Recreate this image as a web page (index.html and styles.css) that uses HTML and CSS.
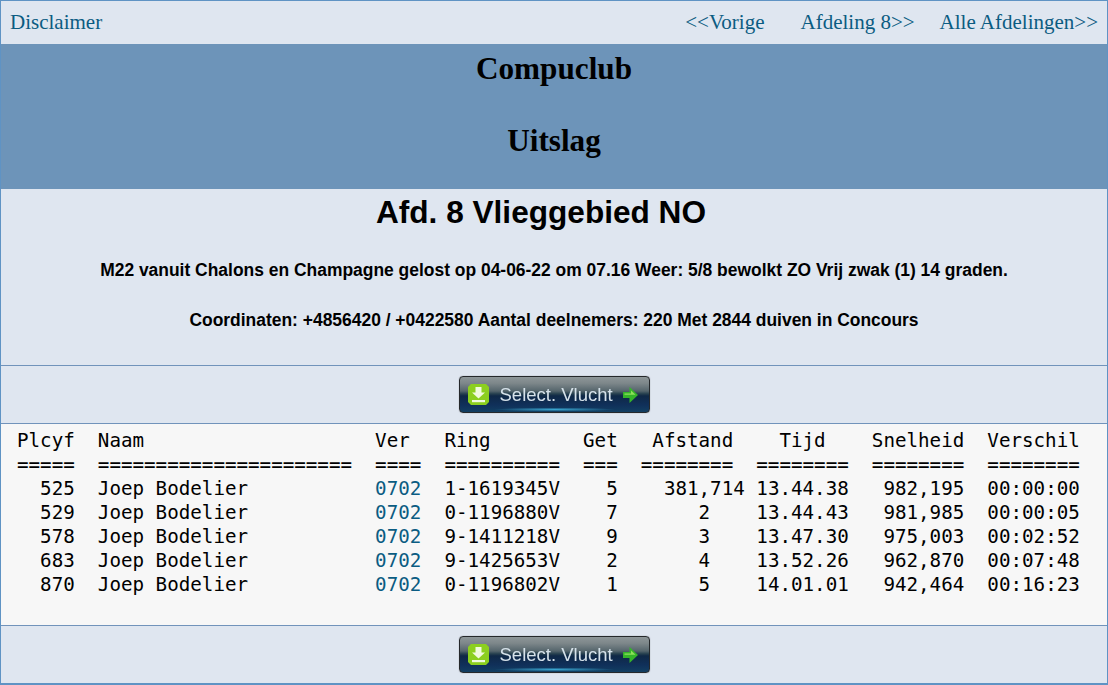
FILE: index.html
```html
<!DOCTYPE html>
<html lang="nl">
<head>
<meta charset="utf-8">
<title>Uitslag</title>
<link rel="stylesheet" href="styles.css">
</head>
<body>
<div class="page">
  <nav class="topbar">
    <a href="#">Disclaimer</a>
    <div class="topbar-right">
      <a href="#">&lt;&lt;Vorige</a>
      <a href="#" class="next">Afdeling 8&gt;&gt;</a>
      <a href="#" class="all">Alle Afdelingen&gt;&gt;</a>
    </div>
  </nav>
  <header class="band">
    <h2>Compuclub</h2>
    <h2>Uitslag</h2>
  </header>
  <section class="info">
    <h1>Afd. 8 Vlieggebied NO</h1>
    <p>M22 vanuit Chalons en Champagne gelost op 04-06-22 om 07.16 Weer: 5/8 bewolkt ZO Vrij zwak (1) 14 graden.</p>
    <p>Coordinaten: +4856420 / +0422580 Aantal deelnemers: 220 Met 2844 duiven in Concours</p>
  </section>
  <div class="btnrow">
    <a href="#" class="vbtn">
      <svg class="ic-dl" width="21" height="21" viewBox="0 0 21 21"><path d="M3 0h15l3 3v15l-3 3H3l-3-3V3z" fill="#8ccf1e"/><path d="M7.500 3h6v5.500h3.500l-6.500 6-6.500-6h3.500z" fill="#f0fadc"/><rect x="4" y="16" width="13" height="2.200" fill="#f0fadc"/></svg>
      <span class="vbtn-label">Select. Vlucht</span>
      <svg class="ic-arrow" width="15" height="16" viewBox="0 0 15 16"><path d="M0 5h6.500V0L15 8l-8.500 8v-5H0z" fill="#35b52a"/><path d="M1.500 6.500h6.500V3.500l4.500 4.300H1.500z" fill="#8fe05a"/></svg>
    </a>
  </div>
  <pre class="uitslag">Plcyf  Naam                    Ver   Ring        Get   Afstand    Tijd    Snelheid  Verschil
=====  ======================  ====  ==========  ===  ========  ========  ========  ========
  525  Joep Bodelier           <a href="#">0702</a>  1-1619345V    5    381,714 13.44.38   982,195  00:00:00
  529  Joep Bodelier           <a href="#">0702</a>  0-1196880V    7       2    13.44.43   981,985  00:00:05
  578  Joep Bodelier           <a href="#">0702</a>  9-1411218V    9       3    13.47.30   975,003  00:02:52
  683  Joep Bodelier           <a href="#">0702</a>  9-1425653V    2       4    13.52.26   962,870  00:07:48
  870  Joep Bodelier           <a href="#">0702</a>  0-1196802V    1       5    14.01.01   942,464  00:16:23

</pre>
  <div class="btnrow btnrow-last">
    <a href="#" class="vbtn">
      <svg class="ic-dl" width="21" height="21" viewBox="0 0 21 21"><path d="M3 0h15l3 3v15l-3 3H3l-3-3V3z" fill="#8ccf1e"/><path d="M7.500 3h6v5.500h3.500l-6.500 6-6.500-6h3.500z" fill="#f0fadc"/><rect x="4" y="16" width="13" height="2.200" fill="#f0fadc"/></svg>
      <span class="vbtn-label">Select. Vlucht</span>
      <svg class="ic-arrow" width="15" height="16" viewBox="0 0 15 16"><path d="M0 5h6.500V0L15 8l-8.500 8v-5H0z" fill="#35b52a"/><path d="M1.500 6.500h6.500V3.500l4.500 4.300H1.500z" fill="#8fe05a"/></svg>
    </a>
  </div>
</div>
</body>
</html>
```

FILE: styles.css
```css
* { box-sizing: border-box; }
html, body { margin: 0; padding: 0; }
body { background: #fff; }
.page {
  height: 685px;
  border: 1px solid #5f93c4;
  border-bottom-width: 2px;
  background: #dfe6f0;
  display: flex;
  flex-direction: column;
  overflow: hidden;
}
a { color: #0b5c82; text-decoration: none; }
.topbar {
  height: 43px;
  display: flex;
  justify-content: space-between;
  align-items: center;
  padding: 0 9px;
  font: 21px/1 "Liberation Serif", serif;
}
.topbar-right { display: flex; }
.next { margin-left: 36px; }
.all { margin-left: 25px; }
.band {
  height: 145px;
  padding-top: 1px;
  background: #6d94b9;
  text-align: center;
  color: #000;
}
.band h2 {
  margin: 0;
  font: bold 31.2px/48px "Liberation Serif", serif;
}
.band h2 + h2 { margin-top: 24px; }
.info {
  height: 177px;
  text-align: center;
  color: #000;
  font-family: "Liberation Sans", sans-serif;
  border-bottom: 1px solid #7193bb;
}
.info h1 {
  margin: 0 0 25px;
  padding-right: 26px;
  font-size: 31.6px;
  font-weight: bold;
  line-height: 46px;
}
.info p {
  margin: 0 0 30px;
  font-size: 17.44px;
  font-weight: bold;
  line-height: 20px;
}
.btnrow {
  height: 57px;
  display: flex;
  align-items: center;
  justify-content: center;
}
.btnrow-last { flex: 1; border-top: 1px solid #7193bb; }
.vbtn {
  width: 191px;
  height: 37px;
  border: 1px solid #25282b;
  border-radius: 4px;
  display: flex;
  align-items: center;
  padding: 0 11px 0 8px;
  background:
    radial-gradient(ellipse 60px 2px at 50% 32.500px, #3aa6d0 0%, rgba(58, 166, 208, 0) 100%),
    linear-gradient(#8e9698 0%, #7d878a 18%, #55656c 40%, #26404f 48%, #0f2846 54%, #10305a 80%, #123f62 100%);
  box-shadow: 0 0 1px #6b7075;
}
.ic-dl { flex: none; filter: blur(0.3px); }
.vbtn-label {
  margin-left: 11px;
  padding-top: 2px;
  color: #d6e2ea;
  font: 18.5px/1 "Liberation Sans", sans-serif;
  white-space: nowrap;
  flex: 1;
  filter: blur(0.3px);
}
.ic-arrow { flex: none; filter: blur(0.3px); }
.uitslag {
  margin: 0;
  height: 202px;
  padding: 5px 0 0 16px;
  background: #f7f7f7;
  border-top: 1px solid #7193bb;
  color: #000;
  font: 19.2px/24px "DejaVu Sans Mono", monospace;
}
```
